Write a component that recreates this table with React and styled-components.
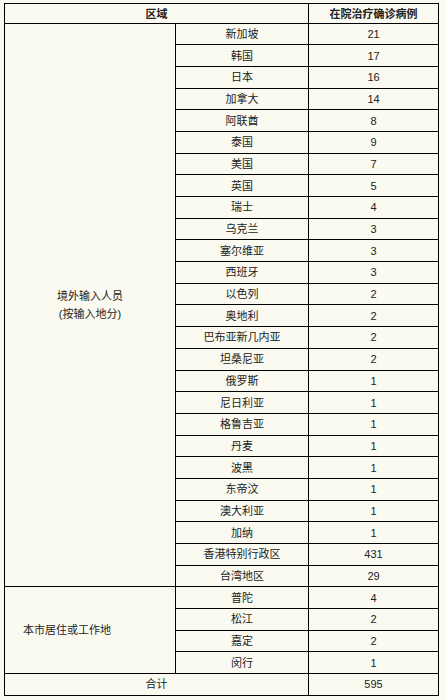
import styled, { createGlobalStyle } from 'styled-components';

const GlobalStyle = createGlobalStyle`
  html, body {
    margin: 0;
    padding: 0;
    background: #fafaf0;
  }
  body {
    font-family: "Liberation Sans", "Noto Sans CJK SC", sans-serif;
    color: #222;
  }
`;

const abroad = [
  ['新加坡', 21],
  ['韩国', 17],
  ['日本', 16],
  ['加拿大', 14],
  ['阿联酋', 8],
  ['泰国', 9],
  ['美国', 7],
  ['英国', 5],
  ['瑞士', 4],
  ['乌克兰', 3],
  ['塞尔维亚', 3],
  ['西班牙', 3],
  ['以色列', 2],
  ['奥地利', 2],
  ['巴布亚新几内亚', 2],
  ['坦桑尼亚', 2],
  ['俄罗斯', 1],
  ['尼日利亚', 1],
  ['格鲁吉亚', 1],
  ['丹麦', 1],
  ['波黑', 1],
  ['东帝汶', 1],
  ['澳大利亚', 1],
  ['加纳', 1],
  ['香港特别行政区', 431],
  ['台湾地区', 29],
];

const local = [
  ['普陀', 4],
  ['松江', 2],
  ['嘉定', 2],
  ['闵行', 1],
];

const Page = styled.div`
  padding: 3px 0 0 4px;
`;

const Table = styled.table`
  width: 434px;
  border-collapse: collapse;
  table-layout: fixed;
  font-size: 11px;
`;

const HeadRow = styled.tr`
  height: 19.5px;
`;

const Row = styled.tr`
  height: 21.7px;
`;

const Th = styled.th`
  border: 1px solid #000;
  padding: 0;
  font-weight: bold;
  text-align: center;
  vertical-align: middle;
`;

const Td = styled.td`
  border: 1px solid #000;
  padding: 0;
  text-align: ${({ $align }) => $align || 'center'};
  padding-left: ${({ $indent }) => $indent || 0};
  vertical-align: middle;
  line-height: 18px;
`;

export default function App() {
  return (
    <>
      <GlobalStyle />
      <Page>
        <Table>
          <colgroup>
            <col style={{ width: 171 }} />
            <col style={{ width: 133 }} />
            <col style={{ width: 130 }} />
          </colgroup>
          <thead>
            <HeadRow>
              <Th colSpan={2}>区域</Th>
              <Th>在院治疗确诊病例</Th>
            </HeadRow>
          </thead>
          <tbody>
            {abroad.map(([name, n], i) => (
              <Row key={name}>
                {i === 0 && (
                  <Td rowSpan={abroad.length}>
                    境外输入人员
                    <br />
                    (按输入地分)
                  </Td>
                )}
                <Td>{name}</Td>
                <Td>{n}</Td>
              </Row>
            ))}
            {local.map(([name, n], i) => (
              <Row key={name}>
                {i === 0 && (
                  <Td rowSpan={local.length} $align="left" $indent="18px">
                    本市居住或工作地
                  </Td>
                )}
                <Td>{name}</Td>
                <Td>{n}</Td>
              </Row>
            ))}
            <Row>
              <Td colSpan={2}>合计</Td>
              <Td>595</Td>
            </Row>
          </tbody>
        </Table>
      </Page>
    </>
  );
}
